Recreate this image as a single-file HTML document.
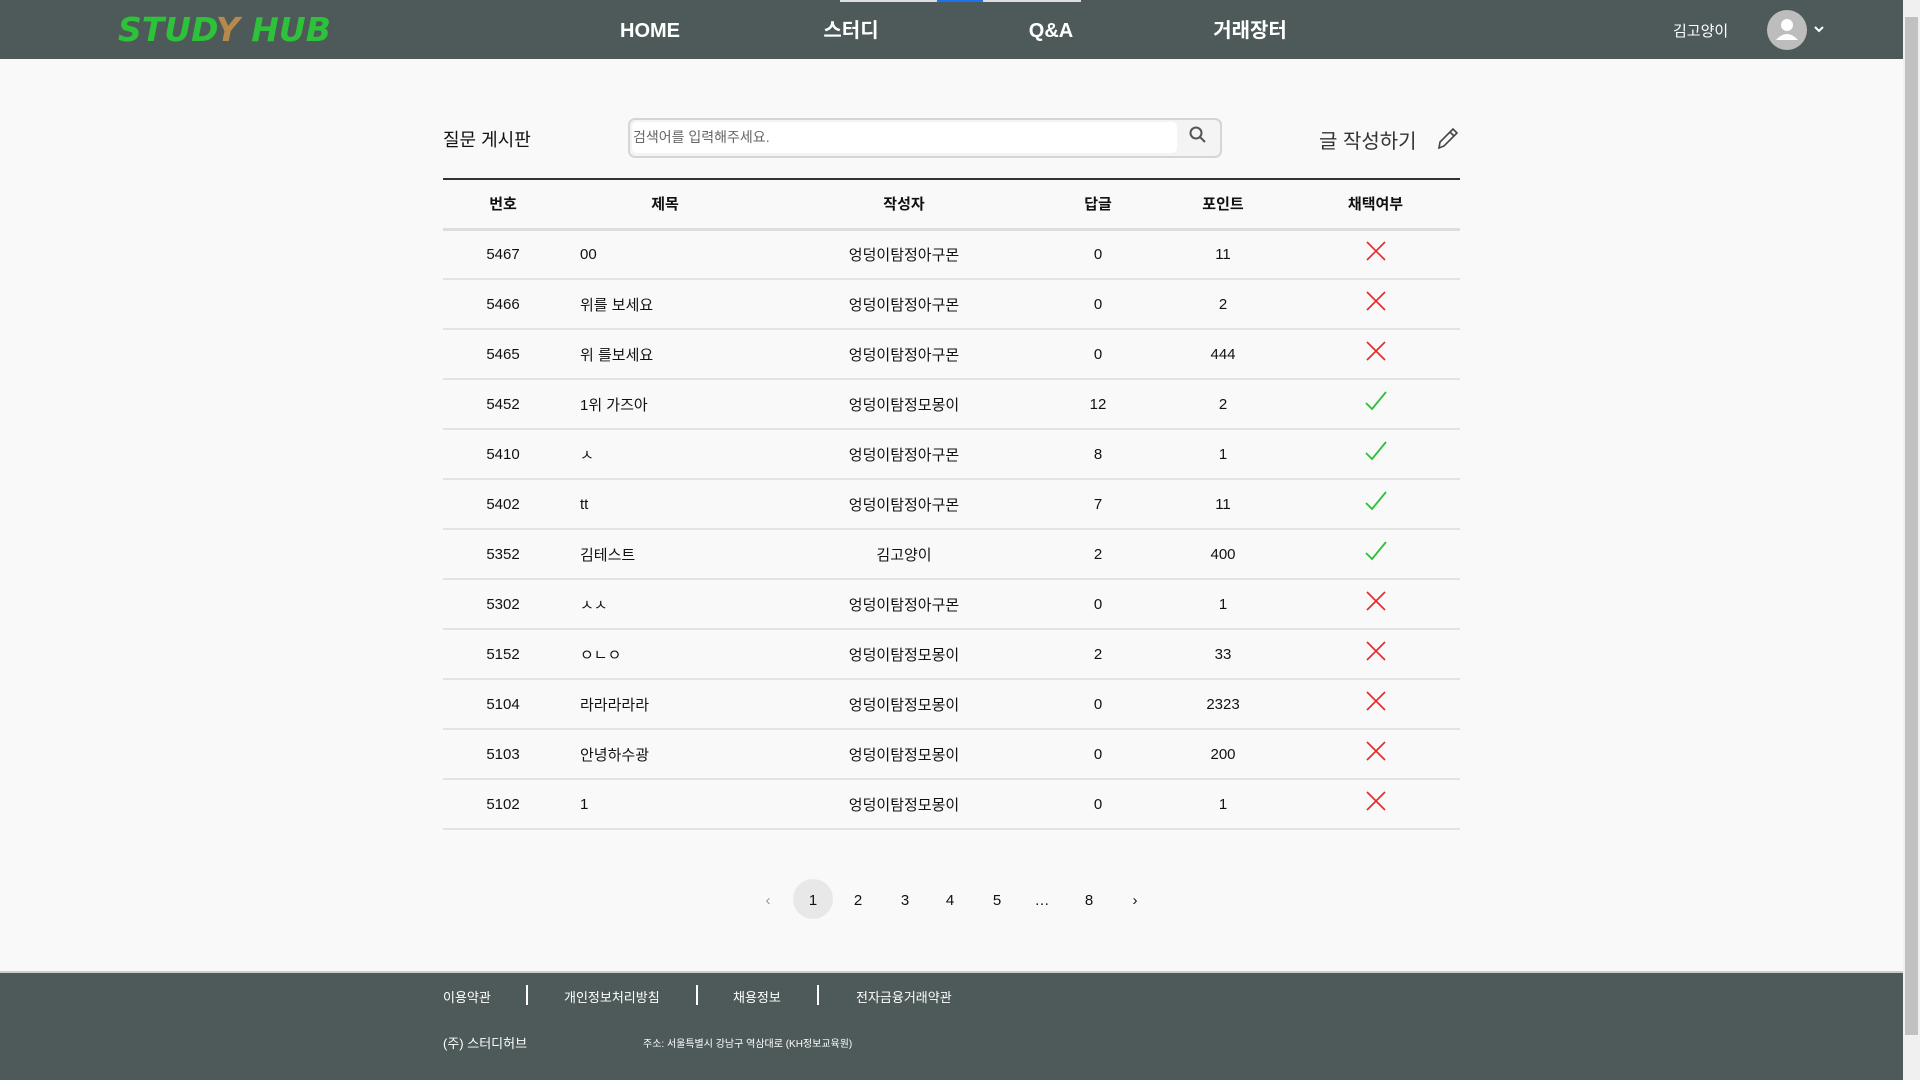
<!DOCTYPE html>
<html><head><meta charset="utf-8">
<style>
*{margin:0;padding:0;box-sizing:border-box}
body{width:1920px;height:1080px;overflow:hidden;background:#f9f9f9;font-family:"Liberation Sans","Noto Sans CJK KR",sans-serif;color:#111;position:relative}
.hdr{position:absolute;left:0;top:0;width:1903px;height:59px;background:#4d5a59}
.abs{position:absolute;white-space:nowrap}
.nav{color:#fff;font-weight:bold;font-size:20px;top:0;line-height:62px;height:59px;transform:translateX(-50%)}
.logo{left:118px;top:10px;font-family:"DejaVu Sans",sans-serif;font-style:italic;font-weight:bold;font-size:33px;color:#2ec23a;letter-spacing:0px}
.sb{position:absolute;right:0;top:0;width:17px;height:1080px;background:#f0f0f0}
.sb div{position:absolute;left:2px;top:17px;width:13px;height:1018px;background:#c1c1c1}
table{position:absolute;left:443px;top:178px;width:1017px;border-collapse:collapse;font-size:15px;table-layout:fixed}
th{height:50px;border-top:2px solid #333;border-bottom:3px solid #ddd;font-weight:bold;font-size:15px}
td{height:50px;border-bottom:2px solid #e3e3e3;text-align:center}
td.t{text-align:left;padding-left:17px}
.pg{top:892px;font-size:15px;transform:translateX(-50%)}
.ft{position:absolute;left:0;top:971px;width:1903px;height:109px;background:#4d5a59;border-top:2px solid #ccc}
.fl{color:#fff;font-size:13px;top:987px}
.bar{position:absolute;top:985px;width:2px;height:20px;background:#fff}
</style></head><body>
<div class="hdr"></div>
<div class="abs" style="left:840px;top:0;width:97px;height:2px;background:#ddd"></div>
<div class="abs" style="left:937px;top:0;width:46px;height:2px;background:#1a73e8"></div>
<div class="abs" style="left:983px;top:0;width:98px;height:2px;background:#ddd"></div>
<div class="abs logo">STUD<span style="color:#b58a4a">Y</span> HUB</div>
<div class="abs nav" style="left:650px">HOME</div>
<div class="abs nav" style="left:851px">스터디</div>
<div class="abs nav" style="left:1051px">Q&amp;A</div>
<div class="abs nav" style="left:1250px">거래장터</div>
<div class="abs" style="left:1673px;top:20px;color:#fff;font-size:15px">김고양이</div>
<svg class="abs" style="left:1766px;top:10px" width="64" height="40"><circle cx="21" cy="20" r="20" fill="#bdbdbd"/><circle cx="21" cy="15" r="6" fill="#fff"/><path d="M10 30 Q21 18 32 30 Z" fill="#fff"/><path d="M49 17 L53 21 L57 17" stroke="#fff" stroke-width="2" fill="none"/></svg>
<div class="sb"><div></div></div>

<div class="abs" style="left:443px;top:126px;font-size:18px">질문 게시판</div>
<div class="abs" style="left:628px;top:118px;width:594px;height:40px;border:2px solid #d5d5d5;border-radius:7px;background:#f4f4f4"></div>
<div class="abs" style="left:632px;top:122px;width:545px;height:31px;background:#fff;border-radius:5px"></div>
<div class="abs" style="left:633px;top:127px;font-size:14px;color:#666">검색어를 입력해주세요.</div>
<svg class="abs" style="left:1188px;top:125px" width="20" height="20"><circle cx="8" cy="8" r="5.5" stroke="#555" stroke-width="2" fill="none"/><path d="M12 12 L17 17" stroke="#555" stroke-width="2"/></svg>
<div class="abs" style="left:1319px;top:125px;font-size:20px;color:#333">글 작성하기</div>
<svg class="abs" style="left:1435px;top:126px" width="26" height="26"><path d="M4 22 L5 16 L18 3 L22 7 L9 20 Z M15 6 L19 10" stroke="#444" stroke-width="1.6" fill="none"/></svg>

<table>
<colgroup><col style="width:120px"><col style="width:204px"><col style="width:274px"><col style="width:114px"><col style="width:136px"><col style="width:169px"></colgroup>
<tr><th>번호</th><th>제목</th><th>작성자</th><th>답글</th><th>포인트</th><th>채택여부</th></tr>
<tr><td>5467</td><td class="t">00</td><td>엉덩이탐정아구몬</td><td>0</td><td>11</td><td>X</td></tr>
<tr><td>5466</td><td class="t">위를 보세요</td><td>엉덩이탐정아구몬</td><td>0</td><td>2</td><td>X</td></tr>
<tr><td>5465</td><td class="t">위 를보세요</td><td>엉덩이탐정아구몬</td><td>0</td><td>444</td><td>X</td></tr>
<tr><td>5452</td><td class="t">1위 가즈아</td><td>엉덩이탐정모몽이</td><td>12</td><td>2</td><td>V</td></tr>
<tr><td>5410</td><td class="t">ㅅ</td><td>엉덩이탐정아구몬</td><td>8</td><td>1</td><td>V</td></tr>
<tr><td>5402</td><td class="t">tt</td><td>엉덩이탐정아구몬</td><td>7</td><td>11</td><td>V</td></tr>
<tr><td>5352</td><td class="t">김테스트</td><td>김고양이</td><td>2</td><td>400</td><td>V</td></tr>
<tr><td>5302</td><td class="t">ㅅㅅ</td><td>엉덩이탐정아구몬</td><td>0</td><td>1</td><td>X</td></tr>
<tr><td>5152</td><td class="t">ㅇㄴㅇ</td><td>엉덩이탐정모몽이</td><td>2</td><td>33</td><td>X</td></tr>
<tr><td>5104</td><td class="t">라라라라라</td><td>엉덩이탐정모몽이</td><td>0</td><td>2323</td><td>X</td></tr>
<tr><td>5103</td><td class="t">안녕하수광</td><td>엉덩이탐정모몽이</td><td>0</td><td>200</td><td>X</td></tr>
<tr><td>5102</td><td class="t">1</td><td>엉덩이탐정모몽이</td><td>0</td><td>1</td><td>X</td></tr>
</table>
<script>
document.querySelectorAll('td:last-child').forEach(function(td){
 var x=td.textContent.trim()==='X';
 td.innerHTML=x?'<svg width="24" height="24" style="vertical-align:middle;margin-top:-6px"><path d="M3 3 L21 21 M21 3 L3 21" stroke="#e8282a" stroke-width="1.6"/></svg>':'<svg width="24" height="24" style="vertical-align:middle;margin-top:-6px"><path d="M2 14 L8 20 L22 3" stroke="#2fbf3a" stroke-width="1.8" fill="none"/></svg>';
});
</script>

<div class="abs" style="left:793px;top:879px;width:40px;height:40px;border-radius:50%;background:#e8e8e8"></div>
<div class="abs pg" style="left:768px;color:#999">‹</div>
<div class="abs pg" style="left:813px">1</div>
<div class="abs pg" style="left:858px">2</div>
<div class="abs pg" style="left:905px">3</div>
<div class="abs pg" style="left:950px">4</div>
<div class="abs pg" style="left:997px">5</div>
<div class="abs pg" style="left:1042px">…</div>
<div class="abs pg" style="left:1089px">8</div>
<div class="abs pg" style="left:1135px">›</div>

<div class="ft"></div>
<div class="abs fl" style="left:443px">이용약관</div>
<div class="bar" style="left:526px"></div>
<div class="abs fl" style="left:564px">개인정보처리방침</div>
<div class="bar" style="left:696px"></div>
<div class="abs fl" style="left:733px">채용정보</div>
<div class="bar" style="left:817px"></div>
<div class="abs fl" style="left:856px">전자금융거래약관</div>
<div class="abs" style="left:443px;top:1033px;color:#fff;font-size:13px">(주) 스터디허브</div>
<div class="abs" style="left:643px;top:1035px;color:#fff;font-size:10px">주소: 서울특별시 강남구 역삼대로 (KH정보교육원)</div>
</body></html>
